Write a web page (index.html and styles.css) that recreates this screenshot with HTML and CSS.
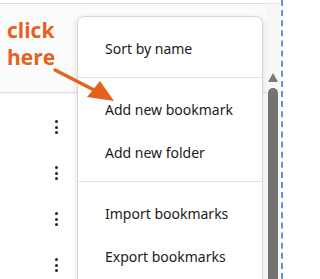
FILE: index.html
```html
<!DOCTYPE html>
<html>
<head>
<meta charset="utf-8">
<link rel="stylesheet" href="styles.css">
</head>
<body>
<div class="page">
  <div class="frame">
    <div class="list">
      <div class="header-row"></div>
      <div class="rows">
        <div class="row"><span class="kebab"><i></i><i></i><i></i></span></div>
        <div class="row"><span class="kebab"><i></i><i></i><i></i></span></div>
        <div class="row"><span class="kebab"><i></i><i></i><i></i></span></div>
        <div class="row"><span class="kebab"><i></i><i></i><i></i></span></div>
      </div>
    </div>
    <div class="scroll">
      <div class="arrow-up"></div>
      <div class="thumb"></div>
    </div>
  </div>
  <div class="edge"></div>

  <div class="menu">
    <div class="section">
      <div class="item">Sort by name</div>
    </div>
    <div class="section">
      <div class="item">Add new bookmark</div>
      <div class="item">Add new folder</div>
    </div>
    <div class="section">
      <div class="item">Import bookmarks</div>
      <div class="item">Export bookmarks</div>
    </div>
  </div>

  <div class="callout">click<br>here</div>
  <svg class="pointer" width="285" height="279" viewBox="0 0 285 279">
    <line x1="55" y1="70" x2="96" y2="91" stroke="#e4621e" stroke-width="3.5" stroke-linecap="round"/>
    <polygon points="87,97 100,81 114,101" fill="#e4621e"/>
  </svg>
</div>
</body>
</html>
```

FILE: styles.css
```css
html, body {
  margin: 0;
  padding: 0;
  background: #fff;
}

.page {
  position: relative;
  width: 285px;
  height: 279px;
  overflow: hidden;
  display: flex;
  background: #fff;
  font-family: "Noto Sans", "Open Sans", sans-serif;
}

.frame {
  width: 280px;
  margin-top: 3px;
  border-top: 1px solid #e3e3e3;
  display: flex;
}

.list {
  flex: 1;
}

.header-row {
  height: 88px;
  background: #fbfbfb;
  border-bottom: 1px solid #dddddd;
  box-shadow: 0 1px 2px rgba(0, 0, 0, 0.06);
}

.rows {
  padding-top: 11px;
}

.row {
  height: 46px;
  display: flex;
  align-items: center;
  padding-left: 54.5px;
}

.kebab {
  display: flex;
  flex-direction: column;
  gap: 2.5px;
}

.kebab i {
  display: block;
  width: 3px;
  height: 3px;
  border-radius: 50%;
  background: #222;
}

.scroll {
  width: 14px;
  display: flex;
  flex-direction: column;
  align-items: center;
  padding-top: 69px;
  background: #f7f7f7;
}

.arrow-up {
  width: 0;
  height: 0;
  border-left: 5.5px solid transparent;
  border-right: 5.5px solid transparent;
  border-bottom: 9px solid #7a7a7a;
}

.thumb {
  margin-top: 6px;
  width: 10px;
  flex: 1;
  background: #737373;
  border-radius: 5px 5px 0 0;
}

.edge {
  margin-left: 1px;
  width: 4px;
  box-sizing: border-box;
  border-left: 2px dashed #6593cf;
}

.menu {
  position: absolute;
  left: 77px;
  top: 16px;
  width: 186px;
  height: 300px;
  box-sizing: border-box;
  background: #fff;
  border: 1px solid #d8d8d8;
  border-radius: 7px;
  box-shadow: 0 2px 6px rgba(0, 0, 0, 0.14);
}

.section {
  padding: 10px 0 7px;
  border-bottom: 1px solid #e2e2e2;
}

.section:last-child {
  border-bottom: none;
}

.item {
  height: 43px;
  line-height: 43px;
  padding-left: 27px;
  font-size: 14px;
  color: #1b1b1b;
  white-space: nowrap;
}

.callout {
  position: absolute;
  left: 7px;
  top: 17px;
  font-family: "Open Sans", "Noto Sans", sans-serif;
  font-weight: 700;
  font-size: 21px;
  line-height: 27px;
  color: #e4621e;
}

.pointer {
  position: absolute;
  left: 0;
  top: 0;
  pointer-events: none;
}
```
